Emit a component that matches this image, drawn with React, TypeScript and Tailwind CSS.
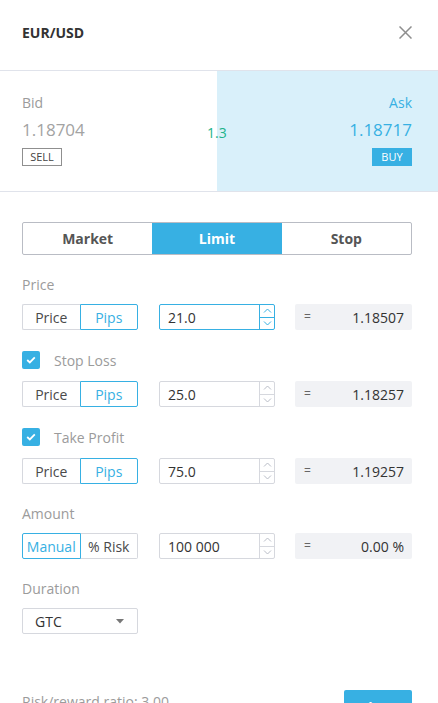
import React from 'react';

const font = { fontFamily: '"Open Sans", "Liberation Sans", sans-serif' };

const Toggle: React.FC<{ left: string; right: string; active: 'left' | 'right' }> = ({ left, right, active }) => (
  <div className="flex w-[116px] h-[26px] text-[14px]">
    <div
      className={
        active === 'left'
          ? 'flex-1 flex items-center justify-center border border-[#37b0e3] text-[#37b0e3] rounded-l-[2px]'
          : 'flex-1 flex items-center justify-center border border-[#d6d8de] border-r-0 text-[#4a4a4a] rounded-l-[2px]'
      }
    >
      {left}
    </div>
    <div
      className={
        active === 'right'
          ? 'flex-1 flex items-center justify-center border border-[#37b0e3] text-[#37b0e3] rounded-r-[2px]'
          : 'flex-1 flex items-center justify-center border border-[#d6d8de] border-l-0 text-[#4a4a4a] rounded-r-[2px]'
      }
    >
      {right}
    </div>
  </div>
);

const Chevron: React.FC<{ up?: boolean; color: string }> = ({ up, color }) => (
  <svg width="9" height="5" viewBox="0 0 9 5" fill="none">
    <path d={up ? 'M1 4.5L4.5 1L8 4.5' : 'M1 0.5L4.5 4L8 0.5'} stroke={color} strokeWidth="1" />
  </svg>
);

const NumInput: React.FC<{ value: string; focused?: boolean }> = ({ value, focused }) => {
  const border = focused ? 'border-[#37b0e3]' : 'border-[#d6d8de]';
  const chev = focused ? '#37b0e3' : '#b8bcc6';
  return (
    <div className={`flex w-[116px] h-[26px] ml-[1px] border ${border} rounded-[2px]`}>
      <div className="flex-1 flex items-center pl-[8px] text-[14px] text-[#333]">{value}</div>
      <div className={`w-[15px] flex flex-col border-l ${border}`}>
        <div className={`flex-1 flex items-center justify-center border-b ${border}`}>
          <Chevron up color={chev} />
        </div>
        <div className="flex-1 flex items-center justify-center">
          <Chevron color={chev} />
        </div>
      </div>
    </div>
  );
};

const Result: React.FC<{ value: string }> = ({ value }) => (
  <div className="flex items-center justify-between w-[117px] h-[26px] bg-[#f1f2f5] rounded-[2px] pl-[9px] pr-[8px] text-[14px] text-[#333]">
    <span className="text-[12px] text-[#666]">=</span>
    <span>{value}</span>
  </div>
);

const Row: React.FC<{ children: React.ReactNode; loose?: boolean }> = ({ children, loose }) => (
  <div className={`flex items-center gap-[20px] ${loose ? 'mt-[11px]' : 'mt-[10px]'}`}>{children}</div>
);

const Check: React.FC = () => (
  <div className="w-[18px] h-[18px] bg-[#37b0e3] rounded-[2px] flex items-center justify-center">
    <svg width="10" height="8" viewBox="0 0 10 8" fill="none">
      <path d="M1.2 4L3.8 6.4L8.8 1.4" stroke="white" strokeWidth="1.8" />
    </svg>
  </div>
);

const App: React.FC = () => {
  return (
    <div className="w-[438px] h-[703px] overflow-hidden bg-white" style={font}>
      <div className="h-[71px] flex items-center justify-between pl-[22px] pr-[26px] pb-[6px] border-b border-[#e0e3eb]">
        <span className="text-[14px] font-bold text-[#333]">EUR/USD</span>
        <svg width="13" height="13" viewBox="0 0 13 13" fill="none">
          <path d="M0.5 0.5L12.5 12.5M12.5 0.5L0.5 12.5" stroke="#8e8e8e" strokeWidth="1.5" />
        </svg>
      </div>

      <div className="relative grid grid-cols-2 h-[121px] border-b border-[#e0e3eb]">
        <div className="flex flex-col items-start pl-[22px] pt-[22px]">
          <span className="text-[14px] text-[#9b9b9b] leading-[20px]">Bid</span>
          <span className="text-[17px] text-[#a3a3a3] leading-[24px] mt-[5px]">1.18704</span>
          <span className="mt-[6px] w-[40px] h-[18px] border border-[#8f8f8f] flex items-center justify-center text-[11px] text-[#444]">
            SELL
          </span>
        </div>
        <div className="flex flex-col items-end pr-[26px] pt-[22px] bg-[#d9f0fa] ml-[-2px]">
          <span className="text-[14px] text-[#37b0e3] leading-[20px]">Ask</span>
          <span className="text-[17px] text-[#37b0e3] leading-[24px] mt-[5px]">1.18717</span>
          <span className="mt-[6px] w-[40px] h-[18px] bg-[#37b0e3] flex items-center justify-center text-[11px] text-white">
            BUY
          </span>
        </div>
        <span className="absolute left-[207px] top-[51px] text-[14px] text-[#22b38a]">1.3</span>
      </div>

      <div className="pl-[22px] pr-[26px] pt-[30px]">
        <div className="flex h-[33px] border border-[#b9bcc4] rounded-[2px] text-[14px] font-bold text-[#555]">
          <div className="flex-1 flex items-center justify-center">Market</div>
          <div className="flex-1 flex items-center justify-center bg-[#37b0e3] text-white">Limit</div>
          <div className="flex-1 flex items-center justify-center">Stop</div>
        </div>

        <div className="mt-[19px] h-[20px] flex items-center text-[14px] text-[#9b9b9b]">Price</div>
        <Row>
          <Toggle left="Price" right="Pips" active="right" />
          <NumInput value="21.0" focused />
          <Result value="1.18507" />
        </Row>

        <div className="mt-[20px] h-[20px] flex items-center gap-[14px] text-[14px] text-[#9b9b9b]">
          <Check />
          <span>Stop Loss</span>
        </div>
        <Row loose>
          <Toggle left="Price" right="Pips" active="right" />
          <NumInput value="25.0" />
          <Result value="1.18257" />
        </Row>

        <div className="mt-[20px] h-[20px] flex items-center gap-[14px] text-[14px] text-[#9b9b9b]">
          <Check />
          <span>Take Profit</span>
        </div>
        <Row loose>
          <Toggle left="Price" right="Pips" active="right" />
          <NumInput value="75.0" />
          <Result value="1.19257" />
        </Row>

        <div className="mt-[19px] h-[20px] flex items-center text-[14px] text-[#9b9b9b]">Amount</div>
        <Row>
          <Toggle left="Manual" right="% Risk" active="left" />
          <NumInput value="100 000" />
          <Result value="0.00 %" />
        </Row>

        <div className="mt-[19px] h-[20px] flex items-center text-[14px] text-[#9b9b9b]">Duration</div>
        <div className="mt-[10px] flex items-center justify-between w-[116px] h-[26px] border border-[#d6d8de] rounded-[2px] pl-[12px] pr-[13px] text-[14px] text-[#333]">
          <span>GTC</span>
          <svg width="8" height="5" viewBox="0 0 8 5">
            <path d="M0 0H8L4 4.5Z" fill="#777" />
          </svg>
        </div>

        <div className="mt-[56px] flex items-start justify-between">
          <span className="mt-[1px] text-[14px] text-[#9b9b9b]">Risk/reward ratio: 3.00</span>
          <div className="w-[68px] h-[34px] bg-[#37b0e3] rounded-[2px] flex items-center justify-center text-[14px] font-bold text-white">
            Place
          </div>
        </div>
      </div>
    </div>
  );
};

export default App;
